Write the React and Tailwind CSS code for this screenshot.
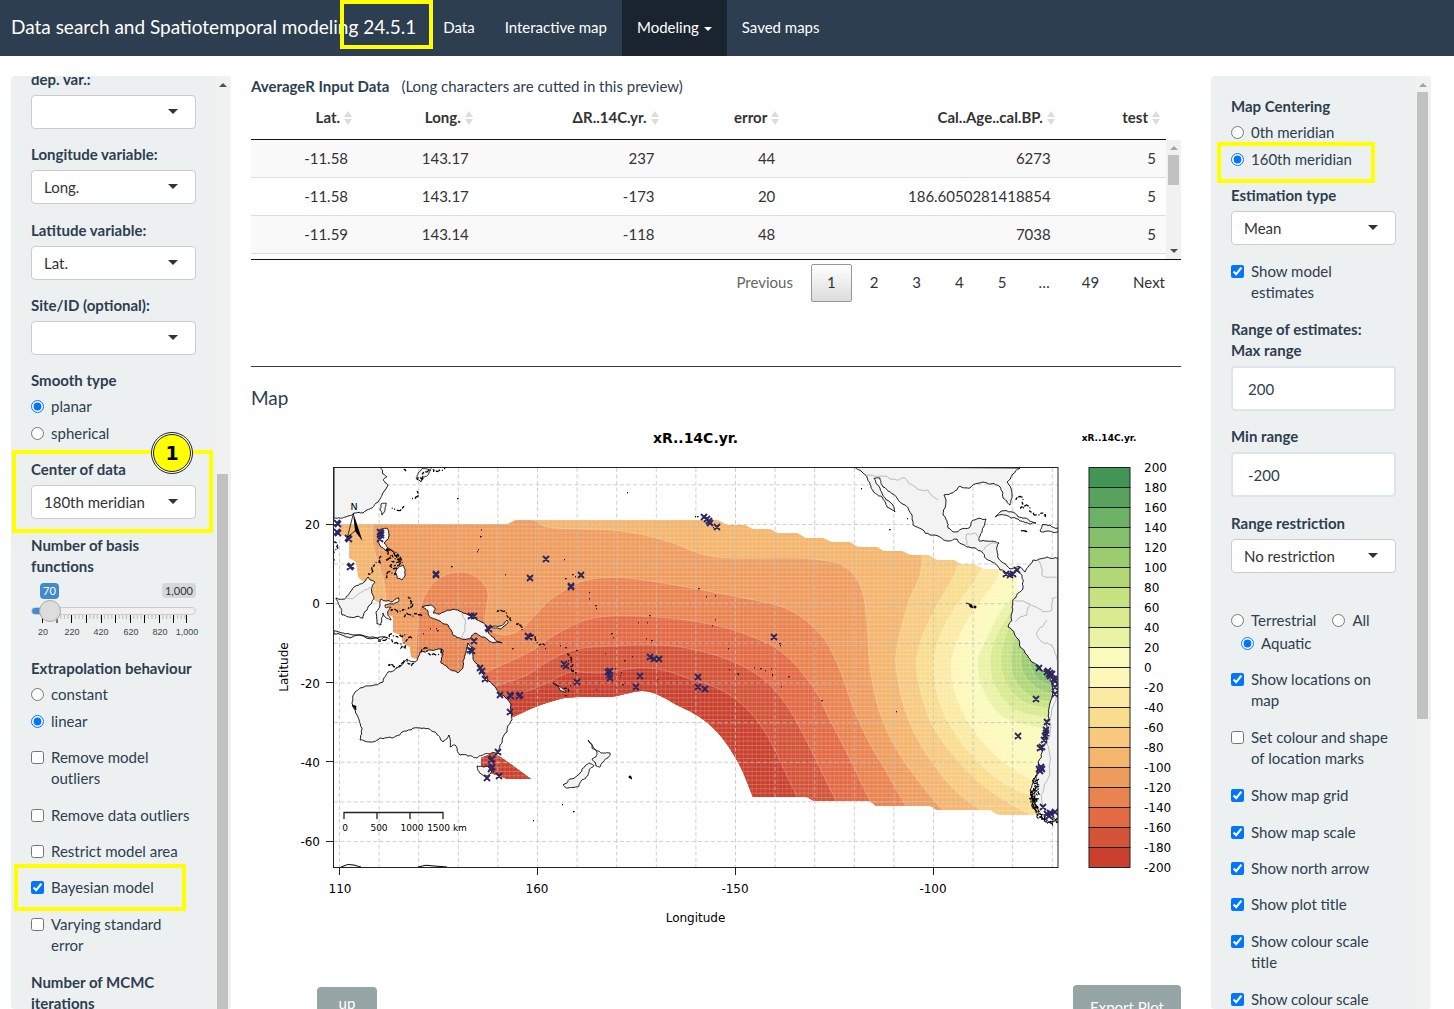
import React from "react";

/* ---------- geometry helpers for the map ---------- */

const parse = (s) => s.trim().split(/\s+/).map((p) => p.split(",").map(Number));

// Catmull-Rom spline through the points
function smooth(s) {
  const p = parse(s);
  let d = `M${p[0][0]},${p[0][1]}`;
  for (let i = 0; i < p.length - 1; i++) {
    const a = p[i - 1] || p[i];
    const b = p[i];
    const c = p[i + 1];
    const e = p[i + 2] || c;
    d += `C${b[0] + (c[0] - a[0]) / 6},${b[1] + (c[1] - a[1]) / 6} ${c[0] - (e[0] - b[0]) / 6},${c[1] - (e[1] - b[1]) / 6} ${c[0]},${c[1]}`;
  }
  return d;
}

// Midpoint displacement gives coastlines their ragged edge; long straight edges stay straight
function rough(s, closed = true, amount = 0.14) {
  let pts = parse(s);
  let seed = pts.length * 7919 + Math.round(pts[0][0]);
  const rnd = () => {
    seed = (seed * 16807) % 2147483647;
    return seed / 2147483647 - 0.5;
  };
  if (closed) pts.push(pts[0]);
  for (let k = 0; k < 3; k++) {
    const out = [pts[0]];
    for (let i = 1; i < pts.length; i++) {
      const [x0, y0] = pts[i - 1];
      const [x1, y1] = pts[i];
      const r = rnd() * amount * 2;
      if (Math.hypot(x1 - x0, y1 - y0) < 40) {
        out.push([(x0 + x1) / 2 - (y1 - y0) * r, (y0 + y1) / 2 + (x1 - x0) * r]);
      }
      out.push([x1, y1]);
    }
    pts = out;
  }
  return "M" + pts.map(([x, y]) => `${x.toFixed(1)},${y.toFixed(1)}`).join("L") + (closed ? "Z" : "");
}

/* ---------- map data ---------- */

const DOMAIN =
  "M340,524L508,524L516,520L718,520L727,525L745,525L753,529L770,529L778,533L797,533L806,538L823,538L832,542L850,542L858,547L877,547L884,551L902,551L911,555L928,555L937,560L954,560L960,564L973,564L983,569L1000,569L1008,572L1017,573L1017,595L1012,615L1020,640L1060,665L1060,815L999,815L990,810L937,810L930,806L876,806L870,801L814,801L807,797L753,797C745,777 742,768 735,757C728,745 722,736 710,725C700,716 690,711 677,705C664,698 655,691 642,691C630,691 620,697 607,697C594,697 572,696 560,699C540,704 528,710 513,717L480,690L440,672L417,659L411,657L410,647L403,643L401,635L393,632L393,617L383,612L383,605L374,600L370,588L358,577L356,562L349,558L349,538L340,534Z" +
  "M481,758L493,753L502,758L531,779L507,779L500,776L490,773L481,766Z";

const WARM = [
  {
    fill: "#ef9d5e",
    line: "387,615 385,588 380,567 373,545 373,524 373,500 480,500 533,520 547,527 580,529 610,530 640,534 670,542 693,551 710,556 733,558 767,558 800,558 820,560 837,563 850,571 859,583 864,598 867,622 869,655 872,680 878,707 888,733 902,758 920,783 943,811",
  },
  {
    fill: "#e98450",
    line: "416,660 417,632 420,608 430,587 443,576 460,572 473,575 483,583 488,593 487,605 485,622 493,632 507,635 523,628 533,617 550,600 565,590 580,582 600,578 627,578 657,582 697,589 733,596 773,604 793,612 810,624 827,643 842,675 853,707 868,740 887,773 907,808",
  },
  {
    fill: "#e26a45",
    line: "480,674 502,665 533,650 553,636 580,622 600,617 623,616 657,617 693,621 727,628 753,637 773,646 793,662 806,678 817,693 830,720 847,753 860,780 871,803",
  },
  {
    fill: "#d35438",
    line: "485,690 505,683 527,675 547,662 565,653 583,648 613,646 640,645 673,646 700,651 727,659 750,670 770,685 788,707 803,734 817,762 837,803",
  },
  {
    fill: "#c9412e",
    line: "495,699 527,691 547,683 560,676 573,672 600,673 627,669 647,668 667,671 693,680 710,685 730,695 750,712 767,735 783,767 798,799",
  },
];

const COOL = [
  { fill: "#f7ca7f", line: "923,550 920,575 910,598 902,625 896,655 898,680 905,710 918,740 940,773 960,795 984,812" },
  { fill: "#f9dd8e", line: "960,560 953,578 940,600 927,625 918,650 917,672 923,700 935,730 957,760 980,783 1007,802 1035,817" },
  { fill: "#fbeaa3", line: "983,565 973,583 957,605 945,625 937,645 933,667 937,693 947,720 967,750 990,773 1013,788 1045,800" },
  { fill: "#fef7b9", line: "1001,565 995,582 980,602 965,625 954,650 951,668 955,693 967,720 987,747 1010,767 1045,788" },
  { fill: "#f9fabb", line: "1016,568 1007,588 990,608 977,632 966,655 964,670 968,693 982,717 1000,740 1020,757 1048,770" },
  { fill: "#eaf2a4", line: "1020,588 1000,612 987,638 979,655 978,670 983,690 997,712 1017,723 1060,731" },
  { fill: "#d9ea8f", line: "1020,600 1004,622 993,645 990,662 993,682 1004,700 1020,712 1060,720" },
  { fill: "#c7e281", line: "1018,612 1007,632 1001,655 1003,675 1012,692 1028,704 1060,711" },
  { fill: "#b1d776", line: "1020,625 1013,645 1011,662 1014,678 1023,690 1037,699 1060,703" },
  { fill: "#9bcc70", line: "1024,637 1021,655 1022,670 1030,682 1042,691 1060,695" },
  { fill: "#85c06d", line: "1030,650 1030,662 1034,674 1044,683 1060,687" },
];

const LAND = [
  "334,467 380,467 383,474 387,477 383,480 388,485 383,493 378,502 372,508 363,513 353,514 345,517 340,518 334,518",
  "381,504 386,503 385,509 382,515 380,510",
  "416,478 421,482 423,477 428,475 431,470 424,468 418,473",
  "380,529 387,528 389,536 384,543 390,549 386,551 381,547 378,538",
  "394,574 398,568 403,565 405,573 402,580 397,578 396,574",
  "336,598 345,599 352,590 363,583 368,577 375,582 372,587 374,598 368,607 363,618 355,617 342,615 340,607",
  "376,612 380,604 381,599 392,602 399,598 398,602 385,605 386,608 391,607 388,611 391,620 386,618 383,613 381,625 377,624",
  "334,631 345,634 356,635 385,637 380,640 350,638 334,634",
  "422,607 430,605 435,608 433,613 440,614 448,610 463,613 477,620 487,628 493,637 502,643 493,643 483,637 475,633 470,639 462,639 453,635 448,625 435,619 430,617 428,611",
  "491,627 500,626 507,620 508,623 500,629",
  "468,643 472,647 473,658 479,665 485,677 493,685 502,695 511,705 512,720 507,732 500,745 497,753 489,754 483,755 477,758 468,756 460,755 455,745 450,747 449,735 443,742 435,732 420,728 402,732 392,738 380,738 370,742 360,740 362,728 357,715 353,707 355,692 360,688 383,682 388,672 398,667 407,659 415,662 420,652 430,650 443,650 441,663 448,668 458,673 463,668 465,655",
  "477,766 484,767 492,765 491,773 486,776 481,774",
  "588,740 592,745 597,751 603,753 610,753 608,758 604,761 600,767 596,766 592,759 596,757 597,752 592,748",
  "586,765 589,763 594,766 589,770 588,775 582,780 578,787 568,788 563,785 570,779 580,773",
  "553,683 558,686 566,692 560,690",
  "853,467 862,472 870,483 875,493 882,497 887,507 895,512 890,502 880,488 874,478 880,478 883,487 897,498 912,515 913,525 930,535 948,541 957,539 967,547 982,552 992,562 1000,570 1008,574 1017,569 1022,575 1023,588 1013,600 1012,613 1008,627 1017,638 1027,655 1032,662 1040,668 1047,673 1052,683 1050,703 1046,723 1042,747 1038,767 1033,783 1032,800 1038,813 1058,823 1058,558 1047,557 1033,560 1025,572 1018,566 1010,569 998,558 999,543 987,541 979,541 982,532 986,519 973,520 969,528 957,532 948,528 943,515 944,495 960,486 970,488 987,483 1000,487 1003,498 1010,505 1012,495 1007,482 1012,475 1020,468",
  "995,517 1000,512 1012,512 1025,518 1036,523 1030,524 1018,519 1005,515",
  "1042,525 1050,525 1058,528 1058,532 1048,531 1040,531",
];

// Island chains and fjords, drawn as broken strokes
const CHAINS = [
  "334,542 337,550 335,560",
  "381,556 374,566 368,574",
  "387,548 391,556 386,560 394,553 398,562 390,566 396,569 400,560 397,555 391,563",
  "386,578 391,572 397,574",
  "386,551 395,552 399,558 402,565",
  "391,611 399,612 406,610",
  "408,597 411,604 408,608 413,602",
  "404,617 413,616 422,617",
  "378,641 395,643 405,648 412,638",
  "385,637 398,637 407,635",
  "497,612 506,614 511,621",
  "516,624 522,630",
  "531,636 537,641 545,645",
  "406,471 405,467",
  "417,480 424,478 429,470 436,471 445,468",
  "417,491 410,499",
  "404,506 392,508",
  "388,665 396,668 404,661 414,663",
  "421,652 427,648 441,649 443,655",
  "1016,500 1022,497 1030,507 1040,513 1045,517",
  "1020,508 1024,508",
  "1021,531 1027,532",
  "564,688 569,692",
  "567,654 570,662 574,671",
];

const FJORDS = [
  "1037,775 1034,783 1038,790 1033,797 1036,804 1033,809 1040,814 1047,820 1057,823",
  "1039,779 1036,788 1032,793 1037,799 1032,803 1038,808 1036,812 1045,817 1055,821",
  "1034,788 1031,795 1035,801 1034,806",
];

const BORDERS = [
  "867,475 890,479 905,478 915,487 928,490 938,500",
  "341,599 352,599 362,592 374,588",
  "462,613 462,639",
  "967,545 967,534 975,533 980,541",
  "982,551 990,544 998,543",
  "1013,600 1030,604 1027,615 1015,622",
  "1038,560 1042,575 1058,579",
  "1030,604 1043,612 1052,610 1052,598 1058,597",
  "1047,620 1037,632 1042,642 1052,645 1057,660",
  "1055,675 1056,700 1050,730 1050,755 1044,785 1043,805",
];

const DOTS =
  "457,498 627,492 481,529 480,536 478,549 477,551 451,566 505,574 564,559 565,578 589,592 589,598 595,605 596,608 575,576 572,574 715,595 706,596 698,588 638,622 647,622 649,615 712,625 715,619 611,633 613,637 605,653 624,660 632,656 646,638 651,640 728,648 729,669 737,673 738,674 754,667 760,668 765,670 771,668 779,643 780,645 772,674 788,676 781,686 772,675 565,647 568,660 570,666 575,672 596,689 657,679 630,777 631,778 562,804 573,811 533,820 695,516 697,516 713,527 861,488 889,529 907,518 896,711 821,700 547,867 621,672 622,684 615,668 620,675 565,695 570,685 560,645 512,648 430,628 436,628 437,630 423,633 545,648 576,650";

const MARKS =
  "338,524 337,523 337,532 338,533 348,538 349,539 351,566 350,567 380,532 381,535 380,539 381,533 436,574 436,575 546,559 530,578 571,586 571,587 581,575 471,616 474,616 488,628 489,629 474,641 470,650 472,651 528,636 529,637 480,668 482,671 485,679 500,695 510,695 511,696 520,695 519,696 510,712 498,752 492,759 491,760 492,767 491,769 487,778 499,776 564,664 566,666 577,682 608,672 609,675 610,678 610,671 640,676 636,687 650,657 654,659 659,659 698,677 698,687 705,689 774,637 704,517 707,519 709,521 710,523 717,527 1006,574 1010,575 1013,574 1017,570 1039,668 1047,672 1049,674 1050,676 1052,674 1048,671 1050,673 1055,681 1055,687 1055,694 1054,679 1036,699 1047,722 1046,730 1046,733 1045,736 1044,740 1040,748 1042,747 1039,769 1041,767 1040,771 1042,769 1018,736 1043,807 1047,814 1049,816 1051,814 1055,812 1050,813";

const LEGEND = [
  "#439556", "#58a25d", "#6cb266", "#85c06d", "#9bcc70", "#b1d776", "#c7e281", "#d9ea8f", "#eaf2a4", "#f9fabb",
  "#fef7b9", "#fbeaa3", "#f9dd8e", "#f7ca7f", "#f4b56d", "#ef9d5e", "#e98450", "#e26a45", "#d35438", "#c9412e",
];

const range = (n) => Array.from({ length: n }, (_, i) => i);

function MapPlot() {
  return (
    <svg viewBox="251 420 930 510" role="img" aria-label="Map of xR..14C.yr." className="mt-3 block w-full font-['DejaVu_Sans',sans-serif]">
      <defs>
        <clipPath id="frame"><rect x="334" y="468" width="724" height="399" /></clipPath>
        <clipPath id="domain"><path d={DOMAIN} /></clipPath>
        <pattern id="mesh" width="13" height="13" x="340" y="524" patternUnits="userSpaceOnUse">
          <path d="M0,.5H13M0,4.8H13M0,9.1H13" stroke="#fff" strokeWidth="1" opacity=".2" />
          <path d="M.5,0V13M4.8,0V13M9.1,0V13" stroke="#fff" strokeWidth="1" opacity=".12" />
        </pattern>
      </defs>

      <text x="695.5" y="443" textAnchor="middle" fontSize="14" fontWeight="700">xR..14C.yr.</text>
      <text x="1109" y="441" textAnchor="middle" fontSize="9" fontWeight="700">xR..14C.yr.</text>

      <g clipPath="url(#frame)">
        <g clipPath="url(#domain)">
          <rect x="334" y="468" width="724" height="399" fill="#f4b56d" />
          {COOL.map((c) => (
            <path key={c.fill} d={smooth(c.line) + "L1070,830L1070,540Z"} fill={c.fill} stroke="#fff" strokeOpacity=".35" strokeWidth=".7" />
          ))}
          {WARM.map((c) => (
            <path key={c.fill} d={smooth(c.line) + "L760,840L440,820Z"} fill={c.fill} stroke="#fff" strokeOpacity=".35" strokeWidth=".7" />
          ))}
          <rect x="334" y="468" width="724" height="399" fill="url(#mesh)" />
        </g>
        <g stroke="#bfbfbf" strokeOpacity=".75" strokeWidth="1" strokeDasharray="4 2.5">
          {range(19).map((i) => <line key={i} x1={339.5 + 39.6 * i} x2={339.5 + 39.6 * i} y1="468" y2="867" />)}
          {range(10).map((i) => <line key={i} y1={484.8 + 39.63 * i} y2={484.8 + 39.63 * i} x1="334" x2="1058" />)}
        </g>
        {LAND.map((l) => <path key={l} d={rough(l)} fill="#f3f3f3" stroke="#000" strokeWidth=".9" strokeLinejoin="round" />)}
        {BORDERS.map((l) => <path key={l} d={rough(l, false)} fill="none" stroke="#aaa" strokeWidth=".8" />)}
        {CHAINS.map((l) => <path key={l} d={rough(l, false, 0.4)} fill="none" stroke="#000" strokeWidth="1.3" strokeDasharray="3 1.5 5 2 1 2" />)}
        {FJORDS.map((l) => <path key={l} d={rough(l, false, 0.7)} fill="none" stroke="#000" strokeWidth="1.2" strokeDasharray="4 1 2 1" />)}
        <path d="M341,867Q348,863 354,865T361,867M418,867Q426,864 434,866L447,867" fill="none" stroke="#000" />
        {parse(DOTS).map(([x, y], i) => <rect key={i} x={x} y={y} width={i % 3 ? 1 : 1.6} height="1.3" />)}
        <path d="M966,603l3,1 1,3 3,1-1-3-2-1z M974,606h2v2h-2z M352,705l4,1v4z M629,776h2v2h-2z" stroke="#000" strokeWidth=".6" />
        <path
          d={parse(MARKS).map(([x, y]) => `M${x - 3},${y - 3}l6,6m0,-6l-6,6`).join("")}
          stroke="#2b2560"
          strokeWidth="1.8"
          fill="none"
        />
      </g>

      {/* north arrow */}
      <text x="354" y="510" textAnchor="middle" fontSize="9.5">N</text>
      <path d="M353.5,513L347.5,537L355,531" fill="none" stroke="#000" strokeWidth=".8" />
      <path d="M353,512L362.5,541L355,531Z" />

      {/* distance scale */}
      <path d="M344,819V812.5H443V819M377,812V819M410,812V819" fill="none" stroke="#222" strokeWidth="1.3" />
      <g fontSize="9" textAnchor="middle">
        <text x="345" y="831">0</text>
        <text x="379" y="831">500</text>
        <text x="412" y="831">1000</text>
        <text x="447" y="831">1500 km</text>
      </g>

      <rect x="333.5" y="467.5" width="724.5" height="400" fill="none" stroke="#222" />
      <g stroke="#222">
        {[339.5, 537.5, 735.5, 933.5].map((x) => <line key={x} x1={x} x2={x} y1="867" y2="875" />)}
        {[524.5, 603.5, 682.5, 761.5, 841.5].map((y) => <line key={y} y1={y} y2={y} x1="326" x2="333" />)}
      </g>
      <g fontSize="12" textAnchor="middle">
        <text x="340" y="893">110</text>
        <text x="537" y="893">160</text>
        <text x="735" y="893">-150</text>
        <text x="933" y="893">-100</text>
        <text x="695.5" y="922">Longitude</text>
        <text transform="translate(288 667) rotate(-90)">Latitude</text>
      </g>
      <g fontSize="12" textAnchor="end">
        {["20", "0", "-20", "-40", "-60"].map((t, i) => <text key={t} x="320" y={529 + Math.round(79.3 * i)}>{t}</text>)}
      </g>

      {LEGEND.map((c, i) => <rect key={c} x="1089" y={467.5 + 20 * i} width="41" height="20" fill={c} stroke="#222" />)}
      <g fontSize="12">
        {range(21).map((i) => <text key={i} x="1144" y={472 + 20 * i}>{200 - 20 * i}</text>)}
      </g>
    </svg>
  );
}

/* ---------- form controls ---------- */

function Select({ id, label, value, className = "mb-[15px]" }) {
  return (
    <div className={className}>
      <label htmlFor={id} className="mb-[5px] block font-bold">{label}</label>
      <div className="relative">
        <select id={id} defaultValue={value} className="block h-[34px] w-full appearance-none rounded border border-[#ccc] bg-white px-3 text-[#333]">
          <option>{value}</option>
        </select>
        <span className="pointer-events-none absolute top-[14px] right-[18px] border-x-5 border-t-5 border-x-transparent border-t-[#333]" />
      </div>
    </div>
  );
}

function Radios({ name, label, options, checked }) {
  return (
    <fieldset className="mb-[15px]">
      <legend className="mb-[5px] font-bold">{label}</legend>
      <div className="flex flex-col gap-1.5">
        {options.map((o) => (
          <label key={o} className="flex items-start gap-[7px]">
            <input type="radio" name={name} defaultChecked={o === checked} className="mt-1 size-[13px] shrink-0" />
            {o}
          </label>
        ))}
      </div>
    </fieldset>
  );
}

function Check({ label, checked, tall }) {
  return (
    <label className={tall ? "mb-4 flex items-start gap-[7px]" : "mb-[15px] flex items-start gap-[7px]"}>
      <input type="checkbox" defaultChecked={checked} className="mt-1 size-[13px] shrink-0" />
      {label}
    </label>
  );
}

function NumberBox({ id, label, value, className = "mb-[15px]" }) {
  return (
    <div className={className}>
      <label htmlFor={id} className="mb-[5px] block font-bold">{label}</label>
      <input id={id} type="text" inputMode="numeric" defaultValue={value} className="block h-[45px] w-full rounded border-2 border-[#dce4ec] bg-white px-[15px]" />
    </div>
  );
}

function BasisSlider() {
  const big = [11.5, 26, 40.5, 55.5, 70.5, 84.5, 99.5, 113.5, 128.5, 142.5, 155.5];
  const labels = [["20", 12], ["220", 41], ["420", 70], ["620", 100], ["820", 129], ["1,000", 156]];
  return (
    <div className="mb-4">
      <label htmlFor="basis" className="mb-1.5 block font-bold">Number of basis functions</label>
      <div className="flex items-start justify-between pl-[9px] text-[11px] leading-4">
        <output htmlFor="basis" className="rounded bg-[#428bca] px-[3px] text-white">70</output>
        <span className="rounded bg-[#d4d8d9] px-[3px] text-[#333] leading-[15px]">1,000</span>
      </div>
      <input
        id="basis"
        type="range"
        min="20"
        max="1000"
        defaultValue="70"
        className="relative z-10 mt-2 block h-2 w-full appearance-none rounded-full border border-[#ccc] bg-[linear-gradient(to_right,#428bca_12%,#f1eff0_12%)] [&::-webkit-slider-thumb]:size-[22px] [&::-webkit-slider-thumb]:appearance-none [&::-webkit-slider-thumb]:rounded-full [&::-webkit-slider-thumb]:border [&::-webkit-slider-thumb]:border-[#aaa] [&::-webkit-slider-thumb]:bg-[#ddd]"
      />
      <svg viewBox="0 0 165 27" aria-hidden="true" className="block w-full overflow-visible font-['Liberation_Sans',sans-serif]">
        <path d={range(40).map((i) => `M${11.5 + i * 3.65},0v4`).join("")} stroke="#999" strokeWidth=".6" />
        <path d={big.map((x) => `M${x},0v8`).join("")} stroke="#000" />
        {labels.map(([t, x]) => <text key={t} x={x} y="20" textAnchor="middle" fontSize="9" fill="#444">{t}</text>)}
      </svg>
    </div>
  );
}

function ScrollTrack({ arrow, thumb }) {
  return (
    <div aria-hidden="true" className="flex w-4 shrink-0 flex-col items-center bg-[#f1f1f1] pr-px">
      <span className={arrow} />
      <span className={thumb} />
    </div>
  );
}

function LeftPanel() {
  return (
    <aside className="flex min-h-0 w-[220px] shrink-0 overflow-hidden rounded bg-[#ecf0f1]">
      <form className="-mt-[7px] min-w-0 flex-1 pl-5 pr-[19px]">
        <Select id="dep" label="dep. var.:" value="" />
        <Select id="lon" label="Longitude variable:" value="Long." className="mb-4" />
        <Select id="lat" label="Latitude variable:" value="Lat." />
        <Select id="site" label="Site/ID (optional):" value="" />
        <Radios name="smooth" label="Smooth type" options={["planar", "spherical"]} checked="planar" />
        <Select id="center" label="Center of data" value="180th meridian" className="mb-4" />
        <BasisSlider />
        <Radios name="extra" label="Extrapolation behaviour" options={["constant", "linear"]} checked="linear" />
        <Check label="Remove model outliers" tall />
        <Check label="Remove data outliers" />
        <Check label="Restrict model area" />
        <Check label="Bayesian model" checked tall />
        <Check label="Varying standard error" tall />
        <p className="font-bold">Number of MCMC iterations</p>
      </form>
      <ScrollTrack
        arrow="mt-[7px] border-x-4 border-b-4 border-x-transparent border-b-[#505050]"
        thumb="mt-[387px] w-[11px] flex-1 bg-[#c1c1c1]"
      />
    </aside>
  );
}

function RightPanel() {
  return (
    <aside className="flex min-h-0 w-[220px] shrink-0 overflow-hidden rounded bg-[#ecf0f1]">
      <form className="min-w-0 flex-1 pt-5 pl-5 pr-[19px]">
        <Radios name="centering" label="Map Centering" options={["0th meridian", "160th meridian"]} checked="160th meridian" />
        <Select id="est" label="Estimation type" value="Mean" className="mb-4" />
        <Check label="Show model estimates" checked tall />
        <NumberBox id="max" label={<>Range of estimates:<br />Max range</>} value="200" />
        <NumberBox id="min" label="Min range" value="-200" className="mb-4" />
        <Select id="restr" label="Range restriction" value="No restriction" className="mb-[37px]" />
        <div className="mb-[15px] flex flex-wrap gap-y-0.5">
          {["Terrestrial", "All", "Aquatic"].map((o, i) => (
            <label key={o} className={i ? "ml-2.5 flex items-start gap-[7px] pr-1.5" : "flex items-start gap-[7px] pr-1.5"}>
              <input type="radio" name="env" defaultChecked={o === "Aquatic"} className="mt-1 size-[13px] shrink-0" />
              {o}
            </label>
          ))}
        </div>
        <Check label="Show locations on map" checked tall />
        <Check label="Set colour and shape of location marks" tall />
        <Check label="Show map grid" checked tall />
        <Check label="Show map scale" checked />
        <Check label="Show north arrow" checked />
        <Check label="Show plot title" checked tall />
        <Check label="Show colour scale title" checked tall />
        <Check label="Show colour scale" checked />
      </form>
      <ScrollTrack
        arrow="mt-[7px] border-x-4 border-b-4 border-x-transparent border-b-[#a3a3a3]"
        thumb="mt-[5px] h-[627px] w-[11px] shrink-0 bg-[#c1c1c1]"
      />
    </aside>
  );
}

/* ---------- data preview ---------- */

const COLS = ["Lat.", "Long.", "ΔR..14C.yr.", "error", "Cal..Age..cal.BP.", "test"];
const ROWS = [
  ["-11.58", "143.17", "237", "44", "6273", "5"],
  ["-11.58", "143.17", "-173", "20", "186.6050281418854", "5"],
  ["-11.59", "143.14", "-118", "48", "7038", "5"],
];

function DataTable() {
  return (
    <div className="relative border-b border-[#111] text-[#333]">
      <div className="h-[162px] overflow-hidden pr-[15px]">
        <table className="w-full table-fixed border-collapse text-right">
          <colgroup>
            <col className="w-[11.7%]" />
            <col className="w-[13.2%]" />
            <col className="w-[20.3%]" />
            <col className="w-[13.2%]" />
            <col className="w-[30.1%]" />
            <col className="w-[11.5%]" />
          </colgroup>
          <thead>
            <tr className="h-[42px] border-b border-[#111]">
              {COLS.map((c) => (
                <th key={c} scope="col" className="pr-1.5 font-bold whitespace-nowrap">
                  <span className="flex items-center justify-end gap-1">
                    {c}
                    <svg viewBox="0 0 8 14" className="h-3.5 w-2" fill="#dcdcdc" aria-hidden="true">
                      <path d="M4,0L8,6H0ZM4,14L8,8H0Z" />
                    </svg>
                  </span>
                </th>
              ))}
            </tr>
          </thead>
          <tbody>
            {ROWS.map((r, i) => (
              <tr key={i} className="border-b border-[#ddd] odd:bg-[#f9f9f9]">
                {r.map((v, j) => <td key={j} className="px-2.5 py-2">{v}</td>)}
              </tr>
            ))}
          </tbody>
        </table>
      </div>
      <div aria-hidden="true" className="absolute top-[43px] right-0 bottom-0 flex w-[15px] flex-col items-center bg-[#f1f1f1]">
        <span className="mt-1.5 border-x-4 border-b-4 border-x-transparent border-b-[#a3a3a3]" />
        <span className="mt-[5px] h-[30px] w-[11px] bg-[#c1c1c1]" />
        <span className="mt-auto mb-1.5 border-x-4 border-t-4 border-x-transparent border-t-[#505050]" />
      </div>
    </div>
  );
}

function Pager() {
  const item = "h-[38px] rounded-xs border border-transparent px-[15px] pb-0.5";
  return (
    <nav aria-label="Table pages" className="mt-1 flex items-center justify-end gap-0.5 text-[#333]">
      <button type="button" disabled className="h-[38px] rounded-xs border border-transparent px-[15px] pb-0.5 text-[#666]">Previous</button>
      <button type="button" aria-current="page" className="h-[38px] rounded-xs border border-[#979797] bg-linear-to-b from-white to-[#dcdcdc] px-[15px] pb-0.5">1</button>
      {["2", "3", "4", "5"].map((n) => <button key={n} type="button" className={item}>{n}</button>)}
      <span className="px-3.5 pb-0.5">…</span>
      <button type="button" className={item}>49</button>
      <button type="button" className={item}>Next</button>
    </nav>
  );
}

/* ---------- page ---------- */

export default function App() {
  return (
    <div className="relative flex h-screen flex-col overflow-hidden bg-white font-['Lato',sans-serif] text-[15px] leading-[21px] text-[#2c3e50]">
      <header className="flex h-14 shrink-0 items-stretch bg-[#2c3e50] pl-[11px] text-white">
        <a href="#home" className="mr-3 flex items-center pb-1 text-[19px]">Data search and Spatiotemporal modeling 24.5.1</a>
        <nav className="flex">
          <a href="#data" className="flex items-center px-[15px] pb-0.5">Data</a>
          <a href="#map" className="flex items-center px-[15px] pb-0.5">Interactive map</a>
          <a href="#modeling" className="flex items-center gap-[5px] bg-[#1a242f] px-[15px] pb-0.5">
            Modeling
            <span className="mt-1 border-x-4 border-t-4 border-x-transparent border-t-white" />
          </a>
          <a href="#saved" className="flex items-center px-[15px] pb-0.5">Saved maps</a>
        </nav>
      </header>

      <div className="flex min-h-0 flex-1 pt-5 pr-[23px] pl-[11px]">
        <LeftPanel />
        <main className="mr-[30px] ml-5 min-w-0 flex-1">
          <p>
            <strong className="mr-3 font-bold">AverageR Input Data</strong>
            (Long characters are cutted in this preview)
          </p>
          <DataTable />
          <Pager />
          <hr className="mt-16 border-[#2c3e50]" />
          <h2 className="mt-5 text-[19px]">Map</h2>
          <MapPlot />
          <div className="mt-[55px] flex items-start justify-between pl-[66px]">
            <button type="button" className="mt-0.5 h-8 w-[60px] rounded bg-[#95a5a6] text-white">up</button>
            <button type="button" className="h-[45px] rounded bg-[#95a5a6] px-[17px] text-white">Export Plot</button>
          </div>
        </main>
        <RightPanel />
      </div>

      {/* highlight annotations */}
      <div className="pointer-events-none absolute top-0 left-[340px] h-[49px] w-[93px] border-4 border-[#ff0]" />
      <div className="pointer-events-none absolute top-[450px] left-3 h-[83px] w-[201px] border-4 border-[#ff0]" />
      <div className="pointer-events-none absolute top-[864px] left-3.5 h-[47px] w-[172px] border-4 border-[#ff0]" />
      <div className="pointer-events-none absolute top-[142px] right-[79px] h-[41px] w-[158px] border-4 border-[#ff0]" />
      <div className="pointer-events-none absolute top-[432px] left-[151px] flex size-[42px] items-center justify-center rounded-full border border-[#222] bg-white font-['DejaVu_Sans',sans-serif] text-[19px] font-bold text-black">
        <span className="flex size-[38px] items-center justify-center rounded-full border border-[#222] bg-[#ff0]">1</span>
      </div>
    </div>
  );
}
